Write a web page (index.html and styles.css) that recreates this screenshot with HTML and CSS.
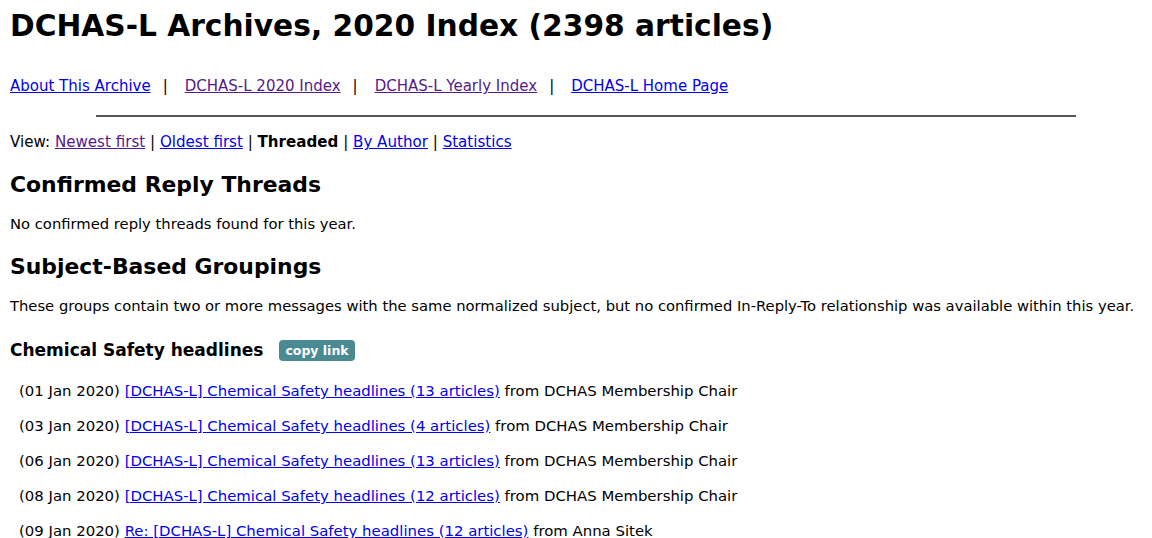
FILE: index.html
```html
<!DOCTYPE html>
<html>
<head>
<meta charset="utf-8">
<title>DCHAS-L Archives, 2020 Index</title>
<link rel="stylesheet" href="styles.css">
</head>
<body>
<h1 class="title">DCHAS-L Archives, 2020 Index (2398 articles)</h1>
<nav class="nav">
  <a href="#" class="lnk">About This Archive</a><span class="sep">|</span><a href="#" class="lnk visited">DCHAS-L 2020 Index</a><span class="sep">|</span><a href="#" class="lnk visited">DCHAS-L Yearly Index</a><span class="sep">|</span><a href="#" class="lnk">DCHAS-L Home Page</a>
</nav>
<hr class="rule">
<div class="view">View: <a href="#" class="lnk visited">Newest first</a> | <a href="#" class="lnk">Oldest first</a> | <b>Threaded</b> | <a href="#" class="lnk">By Author</a> | <a href="#" class="lnk">Statistics</a></div>
<h2 class="sect">Confirmed Reply Threads</h2>
<p class="para">No confirmed reply threads found for this year.</p>
<h2 class="sect">Subject-Based Groupings</h2>
<p class="para nowrap">These groups contain two or more messages with the same normalized subject, but no confirmed In-Reply-To relationship was available within this year.</p>
<div class="group-head"><h3 class="group-title">Chemical Safety headlines</h3><span class="copy">copy link</span></div>
<ul class="items">
  <li class="item">(01 Jan 2020) <a href="#" class="lnk">[DCHAS-L] Chemical Safety headlines (13 articles)</a> from DCHAS Membership Chair</li>
  <li class="item">(03 Jan 2020) <a href="#" class="lnk">[DCHAS-L] Chemical Safety headlines (4 articles)</a> from DCHAS Membership Chair</li>
  <li class="item">(06 Jan 2020) <a href="#" class="lnk">[DCHAS-L] Chemical Safety headlines (13 articles)</a> from DCHAS Membership Chair</li>
  <li class="item">(08 Jan 2020) <a href="#" class="lnk">[DCHAS-L] Chemical Safety headlines (12 articles)</a> from DCHAS Membership Chair</li>
  <li class="item">(09 Jan 2020) <a href="#" class="lnk">Re: [DCHAS-L] Chemical Safety headlines (12 articles)</a> from Anna Sitek</li>
</ul>
</body>
</html>
```
FILE: styles.css
```css
html, body { background: #fff; }
body {
  margin: 0;
  padding: 0 10px;
  font-family: "DejaVu Sans", Verdana, sans-serif;
  font-size: 15px;
  color: #000;
}
.title {
  font-size: 29.7px;
  font-weight: bold;
  margin: 8px 0 0;
  line-height: 36px;
}
.nav {
  margin-top: 32px;
  line-height: 20px;
  font-size: 15px;
}
.sep { margin: 0 17px 0 12px; color: #000; }
.lnk { color: #0000ee; }
.lnk.visited { color: #551a8b; }
.rule {
  margin: 19px 66px 0 86px;
  border: 0;
  border-top: 2px solid #555;
  height: 0;
}
.view {
  margin-top: 15px;
  line-height: 20px;
  font-size: 15.1px;
}
.sect {
  font-size: 21.9px;
  margin: 19px 0 0;
  line-height: 28px;
}
.para {
  margin: 15px 0 0;
  line-height: 20px;
  font-size: 14.75px;
}
.nowrap { white-space: nowrap; }
.group-head {
  display: flex;
  align-items: center;
  gap: 16px;
  margin-top: 22px;
}
.group-title {
  font-size: 17px;
  margin: 0;
  line-height: 24px;
}
.copy {
  background: #4a8a93;
  color: #fff;
  font-weight: bold;
  font-size: 12.5px;
  padding: 2px 6px;
  border-radius: 4px;
  line-height: 17px;
}
.items {
  list-style: none;
  margin: 19px 0 0;
  padding: 0 0 0 9px;
  font-size: 14.9px;
}
.item {
  line-height: 20px;
  margin-bottom: 15px;
}
```
